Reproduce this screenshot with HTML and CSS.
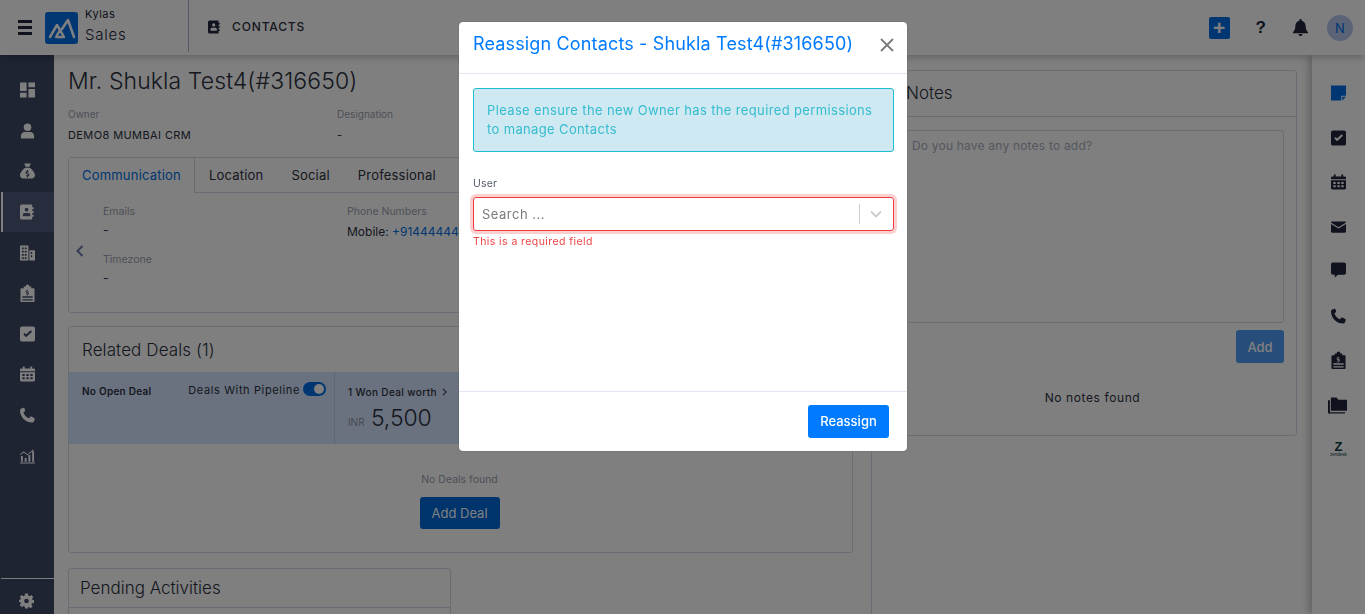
FILE: index.html
```html
<!DOCTYPE html>
<html lang="en">
<head>
<meta charset="utf-8">
<title>Kylas Sales - Contacts</title>
<link rel="stylesheet" href="styles.css">
</head>
<body>
<svg class="defs" width="0" height="0">
  <defs>
    <symbol id="i-dash" viewBox="0 0 16 16"><path d="M0 0h7v9H0zM9 0h7v5H9zM9 7h7v9H9zM0 11h7v5H0z"/></symbol>
    <symbol id="i-user" viewBox="0 0 16 16"><circle cx="8" cy="4" r="4"/><path d="M1 16v-3c0-2.500 2-4 4-4h6c2 0 4 1.500 4 4v3z"/></symbol>
    <symbol id="i-bag" viewBox="0 0 16 16"><path fill-rule="evenodd" d="M4.500 0h7L10 3.500H6zM5.500 4.500h5C13 6.500 16 9.500 16 12.500c0 2-1.500 3.500-3.500 3.500h-9C1.500 16 0 14.500 0 12.500 0 9.500 3 6.500 5.500 4.500zM7.500 7v1.100c-1 .2-1.500.9-1.500 1.700 0 1 .8 1.400 1.900 1.700.8.200 1 .4 1 .7 0 .6-1.200.5-2.200 0l-.4 1c.5.300 1 .4 1.200.4V15h1v-1.100c1-.2 1.600-.9 1.600-1.800 0-1-.8-1.400-1.900-1.700-.8-.2-1-.4-1-.6 0-.6 1-.5 2-.1l.3-1c-.4-.2-.8-.3-1-.4V7z"/></symbol>
    <symbol id="i-contact" viewBox="0 0 16 16"><path fill-rule="evenodd" d="M2 0h11v3h1.500v2H13v2h1.500v2H13v2h1.500v2H13v3H2a2 2 0 0 1-2-2V2a2 2 0 0 1 2-2zM7 3.500a2 2 0 1 0 0 4 2 2 0 0 0 0-4zM3 12.500h8v-1.500c0-1.200-1-2-2-2H5c-1 0-2 .8-2 2z"/></symbol>
    <symbol id="i-building" viewBox="0 0 16 16"><path fill-rule="evenodd" d="M0 0h9v16H0zM10 5h6v11h-6zM2 2v2h2V2zM5 2v2h2V2zM2 5.500v2h2v-2zM5 5.500v2h2v-2zM2 9v2h2V9zM5 9v2h2V9zM2 12.500v2h2v-2zM5 12.500v2h2v-2zM11.500 7v2h1.500V7zM11.500 10.500v2h1.500v-2z"/></symbol>
    <symbol id="i-clip" viewBox="0 0 16 18"><path fill-rule="evenodd" d="M6 1.500a2 2 0 0 1 4 0h2v2h2.500a1 1 0 0 1 1 1V17a1 1 0 0 1-1 1h-13a1 1 0 0 1-1-1V4.500a1 1 0 0 1 1-1H4v-2zM2.500 12v1.500h11V12zM2.500 15v1.500h11V15zM7.300 5v.8c-.8.2-1.300.7-1.300 1.300 0 .8.700 1.100 1.500 1.300.8.200 1 .3 1 .6 0 .5-1 .4-1.900 0l-.3.8c.3.200.7.300 1 .3v.9h.9v-.9c.8-.1 1.300-.7 1.300-1.300 0-.8-.6-1.100-1.500-1.400-.7-.2-.9-.3-.9-.5 0-.5.800-.4 1.600-.1l.3-.8c-.3-.1-.7-.2-.9-.2V5z"/></symbol>
    <symbol id="i-check" viewBox="0 0 16 16"><path fill-rule="evenodd" d="M2 0h12a2 2 0 0 1 2 2v12a2 2 0 0 1-2 2H2a2 2 0 0 1-2-2V2a2 2 0 0 1 2-2zm1.500 8.200L6.500 11.500 12.800 5.500 11.300 4 6.500 8.600 5 6.800z"/></symbol>
    <symbol id="i-cal" viewBox="0 0 16 16"><path fill-rule="evenodd" d="M3 0h2v2h6V0h2v2h1.500A1.500 1.500 0 0 1 16 3.500V5H0V3.500A1.500 1.500 0 0 1 1.500 2H3zM0 6h16v8.500a1.500 1.500 0 0 1-1.500 1.500h-13A1.500 1.500 0 0 1 0 14.500zM2.500 8v2h2.500V8zM6.800 8v2h2.500V8zM11 8v2h2.500V8zM2.500 11.500v2h2.500v-2zM6.800 11.500v2h2.500v-2zM11 11.500v2h2.500v-2z"/></symbol>
    <symbol id="i-phone" viewBox="0 0 16 16"><path d="M3.600.3 1 1.200C.3 1.500 0 2 0 2.800 0 10 6 16 13.200 16c.8 0 1.300-.3 1.600-1l.9-2.600c.2-.5 0-1-.5-1.300l-3-1.500c-.5-.2-1-.1-1.300.3l-1.300 1.500C7.500 11.300 4.700 8.500 3.600 5.400l1.500-1.300c.4-.3.5-.8.300-1.300L4.900 1C4.600.400 4.100.1 3.600.3z"/></symbol>
    <symbol id="i-chart" viewBox="0 0 16 16"><path d="M0 15h16v1H0zM1 8h2v6H1zM5 10h2v4H5zM9 7h2v7H9zM13 3h2v11h-2zM0 6l4-3 4 3 6-5 .6.800L8 7.300l-4-3-3.400 2.500z"/></symbol>
    <symbol id="i-gear" viewBox="0 0 16 16"><path fill-rule="evenodd" d="M6.500 0h3l.4 2.200 1.300.6L13.100 1.500l2.100 2.100-1.300 1.900.6 1.300L16 7v3l-2.200.4-.6 1.300 1.300 1.900-2.100 2.100-1.900-1.300-1.300.6L9.500 16h-3l-.4-2.200-1.300-.6-1.900 1.300L.8 12.400l1.300-1.900-.6-1.300L0 9V7l1.500-.5.600-1.300L.8 3.600l2.100-2.100 1.900 1.300 1.300-.6zM8 5.500a2.500 2.500 0 1 0 0 5 2.500 2.500 0 0 0 0-5z"/></symbol>
    <symbol id="i-note" viewBox="0 0 16 16"><path d="M0 0h16v11h-5v5H0zM12 16l4-4h-4z"/></symbol>
    <symbol id="i-mail" viewBox="0 0 16 12"><path d="M1.200 0h13.600c.7 0 1.200.5 1.200 1.100L8 6.200 0 1.100C0 .5.500 0 1.200 0zM0 2.700l8 5 8-5v8.100c0 .7-.5 1.200-1.200 1.200H1.200C.5 12 0 11.500 0 10.800z"/></symbol>
    <symbol id="i-chat" viewBox="0 0 16 16"><path d="M2 0h12a2 2 0 0 1 2 2v9a2 2 0 0 1-2 2H7.500L4 16v-3H2a2 2 0 0 1-2-2V2a2 2 0 0 1 2-2z"/></symbol>
    <symbol id="i-folder" viewBox="0 0 20 17"><path d="M3 0h6l2 2.500h9V14H3z"/><path d="M0 3h2v12.500h16V17H0z"/></symbol>
  </defs>
</svg>

<header class="topbar">
  <button class="hamburger" type="button" aria-label="Menu"><span></span><span></span><span></span></button>
  <div class="logo">
    <svg viewBox="0 0 33 32" width="33" height="32"><rect width="33" height="32" rx="3" class="logo-bg"/><path class="logo-mark" d="M5 25 12 13l2.500 4M17 17l6-9 6 17M11 25h8l-4-7z"/></svg>
  </div>
  <div class="brand"><span class="brand-top">Kylas</span><span class="brand-bottom">Sales</span></div>
  <div class="crumb">
    <svg class="ico ico-crumb"><use href="#i-contact"/></svg>
    <span>CONTACTS</span>
  </div>
  <div class="top-actions">
    <span class="plus">+</span>
    <span class="help">?</span>
    <svg class="bell" viewBox="0 0 16 18"><path d="M8 0a1.300 1.300 0 0 1 1.300 1.300v.6C12 2.500 13.500 4.800 13.500 7.500c0 3.500 1 4.800 2.500 6.500v1H0v-1c1.500-1.700 2.500-3 2.500-6.500 0-2.700 1.500-5 4.200-5.600v-.6A1.300 1.300 0 0 1 8 0zM5.800 16h4.400a2.200 2 0 0 1-4.400 0z"/></svg>
    <span class="avatar">N</span>
  </div>
</header>

<div class="shell">
  <nav class="sidebar">
    <ul class="nav-list">
      <li class="nav-item"><svg class="ico"><use href="#i-dash"/></svg></li>
      <li class="nav-item"><svg class="ico"><use href="#i-user"/></svg></li>
      <li class="nav-item"><svg class="ico"><use href="#i-bag"/></svg></li>
      <li class="nav-item active"><svg class="ico"><use href="#i-contact"/></svg></li>
      <li class="nav-item"><svg class="ico"><use href="#i-building"/></svg></li>
      <li class="nav-item"><svg class="ico ico-tall"><use href="#i-clip"/></svg></li>
      <li class="nav-item"><svg class="ico"><use href="#i-check"/></svg></li>
      <li class="nav-item"><svg class="ico"><use href="#i-cal"/></svg></li>
      <li class="nav-item"><svg class="ico"><use href="#i-phone"/></svg></li>
      <li class="nav-item"><svg class="ico"><use href="#i-chart"/></svg></li>
    </ul>
    <div class="nav-foot"><svg class="ico"><use href="#i-gear"/></svg></div>
  </nav>

  <main class="content">
    <section class="left">
      <h1 class="title">Mr. Shukla Test4(#316650)</h1>
      <div class="meta">
        <div class="meta-col"><span class="meta-label">Owner</span><span class="meta-value">DEMO8 MUMBAI CRM</span></div>
        <div class="meta-col"><span class="meta-label">Designation</span><span class="meta-value">-</span></div>
      </div>

      <div class="card tabs-card">
        <div class="tabs">
          <span class="tab active">Communication</span>
          <span class="tab">Location</span>
          <span class="tab">Social</span>
          <span class="tab">Professional</span>
        </div>
        <div class="tab-body">
          <span class="tab-arrow">
            <svg viewBox="0 0 8 12" width="8" height="12"><path d="M6.500 1 1.500 6l5 5"/></svg>
          </span>
          <div class="field-col field-col-a">
            <div class="field"><span class="field-label">Emails</span><span class="field-value">-</span></div>
            <div class="field"><span class="field-label">Timezone</span><span class="field-value">-</span></div>
          </div>
          <div class="field-col">
            <div class="field"><span class="field-label">Phone Numbers</span><span class="field-value phone">Mobile: <a class="link">+9144444444444</a></span></div>
          </div>
        </div>
      </div>

      <div class="card deals-card">
        <div class="deals-head">Related Deals (1)</div>
        <div class="band">
          <div class="band-open">
            <span class="band-strong">No Open Deal</span>
            <span class="band-toggle">Deals With Pipeline<span class="switch"></span></span>
          </div>
          <div class="band-won">
            <span class="won-line">1 Won Deal worth <svg viewBox="0 0 6 10" width="5" height="8"><path d="M1 1l4 4-4 4"/></svg></span>
            <span class="won-amount"><small>INR</small> 5,500</span>
          </div>
        </div>
        <div class="deals-empty">
          <span>No Deals found</span>
          <button class="btn btn-deal" type="button">Add Deal</button>
        </div>
      </div>

      <div class="card pending-card">
        <div class="pending-head">Pending Activities</div>
      </div>
    </section>

    <section class="right">
      <div class="card notes-card">
        <div class="notes-head">Notes</div>
        <div class="notes-body">
          <div class="textarea">Do you have any notes to add?</div>
          <div class="notes-actions"><button class="btn btn-add" type="button">Add</button></div>
          <p class="notes-empty">No notes found</p>
        </div>
      </div>
    </section>
  </main>

  <aside class="rail">
    <svg class="ico rail-active"><use href="#i-note"/></svg>
    <svg class="ico"><use href="#i-check"/></svg>
    <svg class="ico"><use href="#i-cal"/></svg>
    <svg class="ico ico-mail"><use href="#i-mail"/></svg>
    <svg class="ico ico-chat"><use href="#i-chat"/></svg>
    <svg class="ico"><use href="#i-phone"/></svg>
    <svg class="ico ico-tall"><use href="#i-clip"/></svg>
    <svg class="ico ico-folder"><use href="#i-folder"/></svg>
    <span class="zen"><b>Z</b><i>zendesk</i></span>
  </aside>
</div>

<div class="backdrop">
  <div class="modal">
    <div class="modal-head">
      <h2>Reassign Contacts - Shukla Test4(#316650)</h2>
      <svg class="close" viewBox="0 0 14 14" width="14" height="14"><path d="M1 1l12 12M13 1 1 13"/></svg>
    </div>
    <div class="modal-body">
      <div class="alert">Please ensure the new Owner has the required permissions to manage Contacts</div>
      <label class="user-label">User</label>
      <div class="select">
        <span class="select-text">Search ...</span>
        <span class="select-sep"></span>
        <svg class="select-chev" viewBox="0 0 12 8" width="12" height="8"><path d="M1 1.500l5 5 5-5"/></svg>
      </div>
      <div class="error">This is a required field</div>
    </div>
    <div class="modal-foot"><button class="btn btn-reassign" type="button">Reassign</button></div>
  </div>
</div>
</body>
</html>
```
FILE: styles.css
```css
* { box-sizing: border-box; }
html, body { margin: 0; height: 100%; }
body {
  display: flex;
  flex-direction: column;
  height: 614px;
  overflow: hidden;
  background: #fff;
  color: #2b3040;
  font-family: "Inter", "Liberation Sans", sans-serif;
  font-size: 13px;
}
.defs { position: absolute; }
.ico { width: 15px; height: 16px; fill: currentColor; display: block; }
.ico-tall { height: 19px; }
.ico-mail { width: 15px; height: 12px; }
.ico-folder { width: 19px; height: 17px; margin-left: -3px; }

/* top bar */
.topbar {
  height: 55px;
  flex: none;
  display: flex;
  align-items: center;
  background: #fff;
  box-shadow: 0 2px 8px rgba(0, 0, 0, .25);
  position: relative;
  z-index: 2;
  padding-left: 18px;
}
.hamburger {
  width: 14px;
  height: 15px;
  padding: 0;
  border: 0;
  background: none;
  display: flex;
  flex-direction: column;
  justify-content: space-between;
  margin-right: 13px;
}
.hamburger span { display: block; height: 3px; background: #20263a; }
.logo { width: 33px; height: 32px; margin-right: 7px; }
.logo-bg { fill: #006ee6; }
.logo-mark { fill: none; stroke: #fff; stroke-width: 2.500; stroke-linejoin: round; stroke-linecap: round; }
.brand { display: flex; flex-direction: column; width: 104px; height: 52px; border-right: 1px solid #aab2c8; align-self: flex-start; padding-top: 7px; }
.brand-top { font-size: 11px; line-height: 15px; color: #20263a; letter-spacing: .5px; }
.brand-bottom { font-size: 15px; line-height: 25px; color: #20263a; font-weight: 300; letter-spacing: .8px; }
.crumb { display: flex; align-items: center; gap: 11px; margin-left: 19px; margin-top: -2px; font-size: 12px; font-weight: 500; letter-spacing: .85px; color: #2b3040; }
.ico-crumb { width: 13px; height: 14px; color: #20263a; }
.top-actions { margin-left: auto; display: flex; align-items: center; padding-right: 12px; }
.plus {
  width: 21px; height: 22px; border-radius: 2px;
  background: #006ee6; color: #fff;
  font: 700 21px/21px "Liberation Sans", sans-serif;
  text-align: center;
  margin-right: 26px;
}
.help { font: 700 17px/20px "Liberation Sans", sans-serif; color: #20263a; margin-right: 27px; }
.bell { width: 15px; height: 17px; fill: #20263a; margin-right: 19px; }
.avatar {
  width: 26px; height: 26px; border-radius: 50%;
  background: #b6c8ee; color: #006ee6;
  text-align: center; font-size: 13px; line-height: 26px;
}

/* shell */
.shell { flex: 1; min-height: 0; display: flex; }
.sidebar { width: 54px; flex: none; background: #3e4866; color: #fff; display: flex; flex-direction: column; justify-content: space-between; }
.nav-list { list-style: none; margin: 15px 0 0; padding: 0; }
.nav-item { height: 40.600px; display: flex; align-items: center; justify-content: center; border-left: 2px solid transparent; margin-left: 1px; padding-right: 3px; }
.nav-item.active { background: #505a7a; border-left-color: #fff; }
.nav-foot { height: 36px; border-top: 1px solid #fff; margin-left: 1px; display: flex; align-items: center; justify-content: center; padding: 8px 2px 0 0; }

.content { flex: 1; min-width: 0; display: flex; padding-left: 14px; overflow: hidden; }
.left { width: 785px; flex: none; padding-top: 12px; display: flex; flex-direction: column; }
.right { width: 426px; flex: none; margin-left: 18px; padding: 15px 0 0 20px; border-left: 1px solid #d6daea; }
.title { margin: 0; flex: none; font-size: 23px; line-height: 28px; font-weight: 300; letter-spacing: .1px; }
.meta { display: flex; flex: none; margin-top: 12px; }
.meta-col { width: 269px; display: flex; flex-direction: column; }
.meta-label { font-size: 10px; line-height: 14px; color: #9aa0ae; }
.meta-value { font-size: 11px; line-height: 14px; margin-top: 7px; letter-spacing: .4px; }

.card { border: 1px solid #d6daea; border-radius: 3px; background: #fff; flex: none; }
.tabs-card { height: 156px; margin-top: 15px; }
.tabs { display: flex; height: 35px; border-bottom: 1px solid #d6daea; }
.tab { padding: 9px 14px 0; font-size: 13px; line-height: 17px; letter-spacing: .2px; }
.tab.active { color: #006ee6; border-right: 1px solid #d6daea; background: #fff; height: 35px; padding: 9px 13px 0; }
.tab-body { display: flex; padding: 12px 0 0; }
.tab-arrow { width: 34px; padding: 39px 0 0 7px; }
.tab-arrow path { fill: none; stroke: #6a7aa8; stroke-width: 2; }
.field-col { display: flex; flex-direction: column; gap: 12px; }
.field-col-a { width: 244px; }
.field { display: flex; flex-direction: column; height: 36px; }
.field-label { font-size: 10.500px; line-height: 14px; color: #9aa0ae; }
.field-value { font-size: 12px; line-height: 16px; margin-top: 3px; white-space: nowrap; }
.phone { margin-top: 5px; }
.link { color: #006ee6; }

.deals-card { height: 227px; margin-top: 13px; display: flex; flex-direction: column; }
.deals-head { height: 45px; padding: 12px 13px 0; font-size: 17px; line-height: 22px; font-weight: 300; letter-spacing: .1px; }
.band { height: 72px; background: #d5e4ff; display: flex; }
.band-open { width: 266px; flex: none; display: flex; justify-content: space-between; padding: 11px 8px 0 13px; border-right: 1px solid #b8cdf0; }
.band-strong { font-size: 10px; line-height: 17px; font-weight: 600; letter-spacing: .25px; }
.band-toggle { display: flex; align-items: flex-start; gap: 3px; font-size: 11px; line-height: 15px; letter-spacing: .62px; height: 16px; }
.switch { display: block; position: relative; width: 23px; height: 14px; border-radius: 7px; background: #006ee6; margin-top: -1px; }
.switch::after { content: ""; position: absolute; right: 2px; top: 2px; width: 10px; height: 10px; border-radius: 50%; background: #fff; }
.band-won { padding: 12px 0 0 13px; display: flex; flex-direction: column; }
.won-line { font-size: 10px; line-height: 16px; font-weight: 500; letter-spacing: .38px; display: flex; align-items: center; gap: 5px; }
.won-line svg path { fill: none; stroke: #2b3040; stroke-width: 1.300; }
.won-amount { font-size: 23px; line-height: 30px; font-weight: 300; margin-top: 3px; letter-spacing: -.1px; }
.won-amount small { font-size: 10px; color: #7a8090; letter-spacing: 0; }
.deals-empty { flex: 1; display: flex; flex-direction: column; align-items: center; padding: 29px 2px 0 0; font-size: 10.500px; line-height: 14px; color: #9aa0ae; }
.btn { border: 0; border-radius: 3px; font-family: inherit; font-size: 13px; color: #fff; background: #006ee6; padding: 0; }
.btn-deal { width: 80px; height: 32px; margin-top: 10px; background: #0069d9; }

.pending-card { width: 383px; height: 80px; margin-top: 15px; }
.pending-head { height: 39px; border-bottom: 1px solid #d6daea; padding: 7px 11px; font-size: 17px; line-height: 24px; font-weight: 300; }

.notes-card { height: 366px; width: 405px; }
.notes-head { height: 46px; border-bottom: 1px solid #d6daea; padding: 10px 13px; font-size: 17px; line-height: 24px; font-weight: 300; }
.notes-body { padding: 13px 12px 0 13px; }
.textarea { height: 193px; border: 1px solid #d6daea; border-radius: 3px; padding: 7px 5px; font-size: 12px; line-height: 16px; color: #a8aec0; letter-spacing: .2px; }
.notes-actions { display: flex; justify-content: flex-end; margin-top: 7px; }
.btn-add { width: 48px; height: 33px; background: #4f9cf5; font-weight: 500; }
.notes-empty { margin: 26px 0 0; padding-right: 5px; text-align: center; font-size: 12px; line-height: 17px; letter-spacing: .6px; }

.rail {
  width: 53px; flex: none;
  background: #fff;
  box-shadow: -3px 0 8px rgba(0, 0, 0, .25);
  position: relative;
  display: grid;
  grid-auto-rows: 44.600px;
  justify-items: center;
  align-items: center;
  align-content: start;
  padding-top: 16px;
  color: #20263a;
}
.rail-active { color: #006ee6; }
.ico-chat { margin-top: -4px; }
.zen { display: flex; flex-direction: column; align-items: center; color: #0a3b3b; line-height: 1; }
.zen b { font: 700 13px/10px "Liberation Sans", sans-serif; }
.zen i { font: normal 4.500px/6px "Liberation Sans", sans-serif; }

/* modal */
.backdrop {
  position: fixed;
  inset: 0;
  z-index: 10;
  background: rgba(0, 0, 0, .5);
  display: flex;
  flex-direction: column;
  align-items: center;
  padding-top: 22px;
}
.modal {
  width: 448px; height: 429px;
  margin-left: 1px;
  background: #fff;
  border-radius: 4px;
  display: flex; flex-direction: column;
  box-shadow: 0 0 1px rgba(0, 0, 0, .6);
}
.modal-head { height: 52px; flex: none; display: flex; align-items: center; justify-content: space-between; padding: 0 13px 8px 14px; border-bottom: 1px solid #e3e6f2; }
.modal-head h2 { margin: 0; font-size: 18px; font-weight: 400; color: #007bff; letter-spacing: .15px; white-space: nowrap; }
.close { flex: none; margin-top: 2px; }
.close path { fill: none; stroke: #7b7b7b; stroke-width: 1.800; }
.modal-body { flex: 1; padding: 14px 13px 0 14px; }
.alert { height: 64px; padding: 12px 13px; background: #cfe9f2; border: 1px solid #1fbfd3; border-radius: 3px; color: #35bccf; font-size: 13px; line-height: 19px; letter-spacing: .36px; }
.user-label { display: block; margin-top: 25px; font-size: 10.500px; line-height: 14px; color: #555c6c; letter-spacing: .2px; }
.select {
  display: flex; align-items: center;
  height: 34px; margin-top: 6px;
  border: 1px solid #ef3b3b; border-radius: 3px;
  box-shadow: 0 0 0 3px #fbd0d0;
  padding: 0 11px 0 8px;
}
.select-text { flex: 1; font-size: 13px; color: #7a7a7a; letter-spacing: .5px; }
.select-sep { width: 1px; height: 20px; background: #cccccc; margin-right: 10px; }
.select-chev path { fill: none; stroke: #cccccc; stroke-width: 1.800; }
.error { margin-top: 4px; font-size: 10.500px; line-height: 14px; color: #ef4444; letter-spacing: .42px; }
.modal-foot { height: 60px; flex: none; display: flex; justify-content: flex-end; align-items: flex-start; padding: 13px 18px 0 0; border-top: 1px solid #e3e6f2; }
.btn-reassign { width: 81px; height: 33px; background: #007bff; font-weight: 500; padding-bottom: 2px; }
```
